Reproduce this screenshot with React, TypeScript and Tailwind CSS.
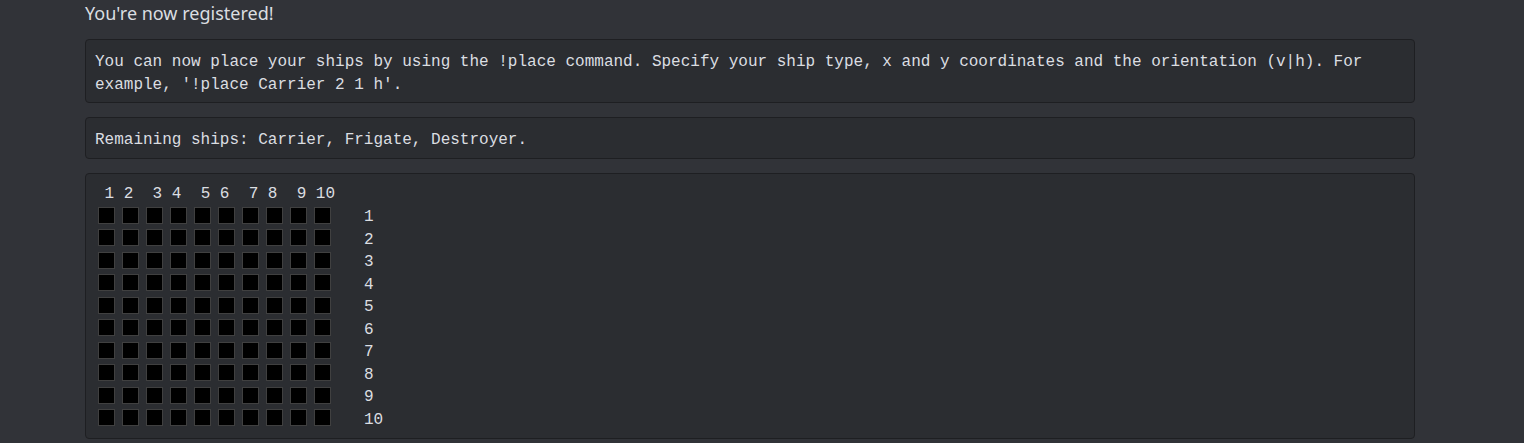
import React from 'react';

const rows = Array.from({ length: 10 }, (_, i) => i + 1);
const cols = Array.from({ length: 10 }, (_, i) => i);

const CodeBlock = ({ children, className = '' }: { children: React.ReactNode; className?: string }) => (
    <div className={`rounded-[4px] border border-[#1e1f22] bg-[#2b2d31] px-[9px] font-['Liberation_Mono',monospace] text-[16px] leading-[22.5px] text-[#dbdee1] whitespace-pre-wrap ${className}`}>
        {children}
    </div>
);

export default function App() {
    return (
        <div className="min-h-[443px] bg-[#313338] font-['Noto_Sans',sans-serif]">
            <div className="ml-[85px] w-[1330px] pt-[1px]">
                <p className="text-[18px] leading-[24px] text-[#dbdee1]">You're now registered!</p>

                <CodeBlock className="mt-[14px] pt-[11px] pb-[6px]">
                    You can now place your ships by using the !place command. Specify your ship type, x and y coordinates and the orientation (v|h). For example, '!place Carrier 2 1 h'.
                </CodeBlock>

                <CodeBlock className="mt-[14px] pt-[11px] pb-[6px]">Remaining ships: Carrier, Frigate, Destroyer.</CodeBlock>

                <CodeBlock className="mt-[14px] pt-[8px] pb-[9px]">
                    <div className="translate-y-[1px]">{' 1 2  3 4  5 6  7 8  9 10'}</div>
                    {rows.map(r => (
                        <div key={r} className="flex h-[22.5px] items-center">
                            <div className="ml-[3px] flex gap-[7px]">
                                {cols.map(c => (
                                    <div key={c} className="h-[17px] w-[17px] border border-[#404040] bg-black" />
                                ))}
                            </div>
                            <span className="ml-[33px] translate-y-[2px]">{r}</span>
                        </div>
                    ))}
                </CodeBlock>
            </div>
        </div>
    );
}
